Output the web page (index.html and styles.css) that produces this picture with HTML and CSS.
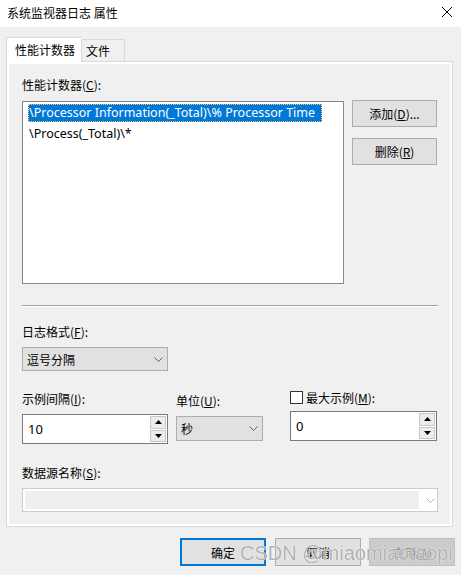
FILE: index.html
```html
<!DOCTYPE html>
<html lang="zh-CN">
<head>
<meta charset="utf-8">
<title>系统监视器日志 属性</title>
<link rel="stylesheet" href="styles.css">
</head>
<body>
<div class="window">
  <div class="titlebar">
    <span class="title">系统监视器日志 属性</span>
    <svg class="close" width="12" height="12" viewBox="0 0 12 12"><path d="M1 1 L11 11 M11 1 L1 11" stroke="#000" stroke-width="1" fill="none"/></svg>
  </div>
  <div class="tabs">
    <div class="tab active">性能计数器</div>
    <div class="tab">文件</div>
  </div>
  <div class="panel">
    <div class="label l-counters">性能计数器(<u>C</u>):</div>
    <div class="row-list">
      <div class="listbox">
        <div class="item selected">\Processor Information(_Total)\% Processor Time</div>
        <div class="item">\Process(_Total)\*</div>
      </div>
      <div class="side-buttons">
        <div class="btn">添加(<u>D</u>)...</div>
        <div class="btn">删除(<u>R</u>)</div>
      </div>
    </div>
    <div class="separator"></div>
    <div class="label l-format">日志格式(<u>F</u>):</div>
    <div class="combo combo-format"><span>逗号分隔</span><svg class="chev" width="9" height="5" viewBox="0 0 9 5"><path d="M0.5 0.5 L4.5 4.5 L8.5 0.5" stroke="#606060" fill="none"/></svg></div>
    <div class="row-interval">
      <div class="col col-a">
        <div class="label">示例间隔(<u>I</u>):</div>
        <div class="spin spin-a">
          <span class="val">10</span>
          <div class="spin-btns">
            <div class="sb"><svg width="7" height="4" viewBox="0 0 7 4"><path d="M3.5 0 L7 4 L0 4 Z" fill="#000"/></svg></div>
            <div class="sb"><svg width="7" height="4" viewBox="0 0 7 4"><path d="M0 0 L7 0 L3.5 4 Z" fill="#000"/></svg></div>
          </div>
        </div>
      </div>
      <div class="col col-b">
        <div class="label l-unit">单位(<u>U</u>):</div>
        <div class="combo combo-unit"><span>秒</span><svg class="chev" width="9" height="5" viewBox="0 0 9 5"><path d="M0.5 0.5 L4.5 4.5 L8.5 0.5" stroke="#606060" fill="none"/></svg></div>
      </div>
      <div class="col col-c">
        <div class="label check-label"><span class="checkbox"></span><span>最大示例(<u>M</u>):</span></div>
        <div class="spin spin-c">
          <span class="val">0</span>
          <div class="spin-btns">
            <div class="sb"><svg width="7" height="4" viewBox="0 0 7 4"><path d="M3.5 0 L7 4 L0 4 Z" fill="#000"/></svg></div>
            <div class="sb"><svg width="7" height="4" viewBox="0 0 7 4"><path d="M0 0 L7 0 L3.5 4 Z" fill="#000"/></svg></div>
          </div>
        </div>
      </div>
    </div>
    <div class="label l-source">数据源名称(<u>S</u>):</div>
    <div class="combo-disabled"><div class="cd-field"></div><svg class="chev" width="9" height="5" viewBox="0 0 9 5"><path d="M0.5 0.5 L4.5 4.5 L8.5 0.5" stroke="#b0b0b0" fill="none"/></svg></div>
  </div>
  <div class="footer">
    <div class="btn btn-ok">确定</div>
    <div class="btn btn-cancel">取消</div>
    <div class="btn btn-apply">应用(<u>A</u>)</div>
    <div class="watermark">CSDN @miaomiaotaopi</div>
  </div>
</div>
</body>
</html>
```

FILE: styles.css
```css
* { box-sizing: border-box; }
html, body { margin: 0; padding: 0; }
body {
  width: 461px;
  height: 575px;
  background: #f0f0f0;
  font-family: "Noto Sans", "Noto Sans CJK SC", sans-serif;
  font-size: 12px;
  color: #000;
  overflow: hidden;
}
u { text-decoration: underline; text-underline-offset: 1px; }
.window { position: relative; width: 461px; height: 575px; }
.titlebar {
  height: 27px;
  background: #fff;
  display: flex;
  align-items: center;
  justify-content: space-between;
  padding: 0 8px 2px 7px;
}
.title { font-family: "Noto Sans CJK SC", sans-serif; font-size: 12px; line-height: 16px; }
.close { display: block; margin-top: -2px; }
.tabs {
  display: flex;
  align-items: flex-end;
  height: 34px;
  padding-left: 6px;
}
.tab {
  font-family: "Noto Sans CJK SC", sans-serif;
  height: 22px;
  padding: 0 5px;
  border: 1px solid #d9d9d9;
  border-bottom: none;
  background: #f0f0f0;
  line-height: 21px;
}
.tab.active {
  height: 25px;
  width: 75px;
  background: #fff;
  padding: 0 0 0 8px;
  line-height: 24px;
  position: relative;
  z-index: 1;
  margin-bottom: -1px;
  border-right: none;
}
.tab:not(.active) { width: 44px; padding: 0 4px; }
.panel {
  margin-left: 6px;
  width: 447px;
  height: 466px;
  border: 1px solid #d9d9d9;
  box-shadow: inset 0 0 0 2px #fff;
  padding: 14px 0 0 15px;
  display: flex;
  flex-direction: column;
  align-items: flex-start;
}
.label {
  font-family: "Noto Sans CJK SC", sans-serif;
  font-size: 12px;
  line-height: 16px;
  height: 16px;
  white-space: nowrap;
}
.l-counters { margin-top: 1px; }
.row-list { display: flex; margin-top: 8px; gap: 8px; }
.listbox {
  width: 322px;
  height: 183px;
  background: #fff;
  border: 1px solid #828790;
  padding: 2px 0 0 5px;
}
.item {
  height: 18px;
  line-height: 18px;
  padding-left: 1px;
  width: 294px;
  white-space: nowrap;
  font-size: 12.5px;
  margin-bottom: 3px;
}
.item.selected {
  background: #0078d7;
  color: #fff;
  outline: 1px dotted #ffc56b;
  outline-offset: -1px;
}
.side-buttons { display: flex; flex-direction: column; gap: 11px; margin-top: -1px; }
.btn {
  font-family: "Noto Sans CJK SC", sans-serif;
  width: 85px;
  height: 27px;
  background: #e1e1e1;
  border: 1px solid #adadad;
  display: flex;
  align-items: center;
  justify-content: center;
  font-size: 12px;
}
.separator {
  margin-top: 21px;
  width: 416px;
  height: 1px;
  background: #a0a0a0;
  box-shadow: 0 1px 0 #fff;
}
.l-format { margin-top: 18px; }
.combo {
  font-family: "Noto Sans CJK SC", sans-serif;
  display: flex;
  align-items: center;
  justify-content: space-between;
  background: #e1e1e1;
  border: 1px solid #adadad;
  padding: 0 4px 0 4px;
}
.combo-format { margin-top: 7px; width: 146px; height: 24px; }
.combo-unit { width: 87px; height: 25px; margin-top: 7px; }
.row-interval { display: flex; margin-top: 20px; }
.col { display: flex; flex-direction: column; }
.col-a { width: 154px; }
.col-b { width: 114px; }
.l-unit { margin-top: 2px; }
.check-label { display: flex; align-items: center; gap: 3px; margin-top: -3px; height: 19px; }
.checkbox {
  width: 13px; height: 13px;
  border: 1px solid #333;
  background: #fff;
  display: inline-block;
}
.spin {
  margin-top: 7px;
  height: 30px;
  background: #fff;
  border: 1px solid #7a7a7a;
  display: flex;
  align-items: center;
  justify-content: space-between;
  padding-left: 5px;
  font-size: 13px;
}
.spin-a { width: 146px; }
.spin-c { width: 147px; margin-top: 4px; }
.spin-btns {
  display: flex;
  flex-direction: column;
  gap: 1px;
  height: 28px;
  padding: 1px 1px 1px 0;
}
.sb {
  width: 16px;
  flex: 1;
  background: #ececec;
  border: 1px solid #c8c8c8;
  display: flex;
  align-items: center;
  justify-content: center;
}
.sb svg { display: block; }
.l-source { margin-top: 21px; }
.combo-disabled {
  margin-top: 7px;
  width: 416px;
  height: 24px;
  border: 1px solid #cccccc;
  background: #fff;
  display: flex;
  align-items: center;
  padding: 2px;
}
.cd-field { width: 394px; height: 100%; background: #efefef; }
.combo-disabled .chev { margin-left: 7px; }
.chev { display: block; }
.footer {
  position: relative;
  display: flex;
  padding: 11px 0 0 180px;
  gap: 10px;
}
.btn-ok { border: 2px solid #0078d7; width: 86px; height: 28px; }
.btn-cancel { width: 86px; height: 28px; margin-left: -1px; }
.btn-apply { width: 86px; height: 28px; background: #cccccc; border-color: #bfbfbf; color: #838383; margin-left: -2px; }
.watermark {
  position: absolute;
  left: 240px;
  top: 12px;
  font-family: "Liberation Sans", sans-serif;
  font-size: 20px;
  line-height: 28px;
  color: rgba(110, 110, 110, 0.55);
  text-shadow: 0 0 1px #fff, 0 0 1px #fff;
  white-space: nowrap;
  pointer-events: none;
}
```
